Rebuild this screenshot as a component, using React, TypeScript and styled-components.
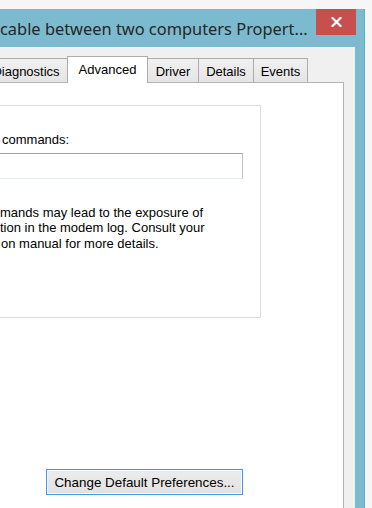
import React from "react";
import styled, { createGlobalStyle } from "styled-components";

const Global = createGlobalStyle`
  html, body { margin: 0; padding: 0; background: #f6f6f6; }
  * { box-sizing: border-box; }
  body { font-family: "Liberation Sans", Arial, sans-serif; font-size: 13px; color: #000; }
`;

const Desktop = styled.div`
  width: 372px;
  height: 508px;
  overflow: hidden;
  padding-top: 9px;
  background: #f6f6f6;
`;

const Window = styled.div`
  margin-left: -40px;
  width: 405px;
  height: 499px;
  background: #7cbad0;
  border-right: 1px solid #69a7bd;
  display: flex;
  flex-direction: column;
`;

const TitleBar = styled.div`
  height: 38px;
  flex: none;
  display: flex;
  align-items: flex-start;
  justify-content: space-between;
`;

const Title = styled.div`
  flex: none;
  padding-left: 40px;
  margin-top: 10px;
  font-family: "Noto Sans", "Open Sans", sans-serif;
  font-size: 16.4px;
  line-height: 20px;
  color: #262626;
  white-space: nowrap;
`;

const CloseButton = styled.div`
  flex: none;
  width: 40px;
  height: 26px;
  margin-right: 8px;
  background: #c7504f;
  display: flex;
  align-items: center;
  justify-content: center;
`;

const Client = styled.div`
  flex: 1;
  margin-right: 9px;
  background: #f0f0f0;
  padding-top: 9px;
  display: flex;
  flex-direction: column;
`;

const TabStrip = styled.div`
  height: 26px;
  flex: none;
  display: flex;
  align-items: flex-end;
  padding-left: 25px;
`;

const Tab = styled.div<{ $w: number; $active?: boolean }>`
  width: ${(p) => p.$w}px;
  height: ${(p) => (p.$active ? 27 : 24)}px;
  margin-bottom: ${(p) => (p.$active ? -1 : 0)}px;
  margin-left: -1px;
  position: relative;
  z-index: ${(p) => (p.$active ? 2 : 1)};
  border: 1px solid #acacac;
  border-bottom: none;
  background: ${(p) => (p.$active ? "#ffffff" : "linear-gradient(#f0f0f0, #e5e5e5)")};
  padding-top: 5px;
  text-align: center;
  line-height: 15px;
  white-space: nowrap;
  overflow: hidden;
`;

const Panel = styled.div`
  flex: 1;
  margin-right: 11px;
  background: #ffffff;
  border: 1px solid #b4b4b4;
  border-bottom: none;
  padding: 22px 0 0 9px;
  display: flex;
  flex-direction: column;
  align-items: flex-start;
`;

const GroupBox = styled.div`
  width: 291px;
  height: 213px;
  border: 1px solid #dcdcdc;
  padding: 26px 0 0 29px;
  display: flex;
  flex-direction: column;
  align-items: flex-start;
`;

const Label = styled.div`
  margin-left: 2px;
  line-height: 15px;
  white-space: nowrap;
`;

const TextBox = styled.div`
  margin-top: 6px;
  margin-left: -25px;
  width: 268px;
  height: 26px;
  background: #ffffff;
  border: 1px solid #abadb3;
  border-top-color: #a0a3aa;
  border-left-color: #e2e3ea;
  border-right-color: #c0c3ca;
  border-bottom-color: #e3e9ef;
`;

const Note = styled.div`
  margin-top: 26px;
  line-height: 15.4px;
`;

const NoteLine = styled.div<{ $indent?: number }>`
  margin-left: ${(p) => p.$indent ?? 0}px;
  white-space: nowrap;
`;

const Button = styled.div`
  margin-top: 151px;
  margin-left: 76px;
  width: 197px;
  height: 26px;
  border: 1px solid #3c9bf0;
  background: linear-gradient(#ececec, #e2e2e2);
  box-shadow: inset 0 0 0 1px #f3f8fd;
  display: flex;
  align-items: center;
  justify-content: center;
  white-space: nowrap;
  font-size: 13.4px;
`;

export default function App() {
  return (
    <>
      <Global />
      <Desktop>
        <Window>
          <TitleBar>
            <Title>cable between two computers Propert...</Title>
            <CloseButton>
              <svg width="11" height="10" viewBox="0 0 11 10">
                <path d="M1.5 1 L9.5 9 M9.5 1 L1.5 9" stroke="#ffffff" strokeWidth="2.2" strokeLinecap="square" fill="none" />
              </svg>
            </CloseButton>
          </TitleBar>
          <Client>
            <TabStrip>
              <Tab $w={84}>Diagnostics</Tab>
              <Tab $w={81} $active>Advanced</Tab>
              <Tab $w={52}>Driver</Tab>
              <Tab $w={56}>Details</Tab>
              <Tab $w={55}>Events</Tab>
            </TabStrip>
            <Panel>
              <GroupBox>
                <Label>commands:</Label>
                <TextBox />
                <Note>
                  <NoteLine>mands may lead to the exposure of</NoteLine>
                  <NoteLine>tion in the modem log. Consult your</NoteLine>
                  <NoteLine $indent={1}>on manual for more details.</NoteLine>
                </Note>
              </GroupBox>
              <Button>Change Default Preferences...</Button>
            </Panel>
          </Client>
        </Window>
      </Desktop>
    </>
  );
}
